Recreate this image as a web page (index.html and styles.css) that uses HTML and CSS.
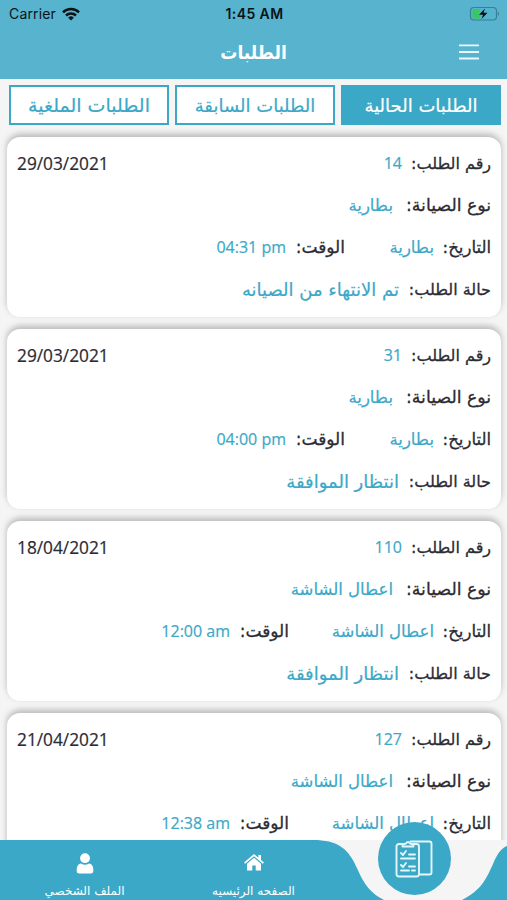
FILE: index.html
```
<!DOCTYPE html>
<html lang="ar" dir="rtl">
<head>
    <meta charset="UTF-8">
    <meta name="viewport" content="width=device-width, initial-scale=1">
    <title>الطلبات</title>
    <link rel="stylesheet" href="styles.css">
</head>
<body>

<div class="app">
    <header class="header">
        <div class="statusBar" dir="ltr">
            <div class="carrier">
                <span>Carrier</span>
                <svg width="18" height="14" viewBox="0 0 18 14" fill="none" stroke="#0b1316" stroke-width="2.5">
                    <path d="M1 5.3a11.5 11.5 0 0 1 16 0"/>
                    <path d="M4 8.5a7.2 7.2 0 0 1 10 0"/>
                    <path d="M6.2 10.7a4 4 0 0 1 5.6 0L9 13.6z" fill="#0b1316" stroke="none"/>
                </svg>
            </div>
            <div class="clock">1:45 AM</div>
            <svg class="battery" width="31" height="16" viewBox="0 0 31 16">
                <rect x="1.500" y="1.500" width="26" height="12.500" rx="3.500" fill="none" stroke="#3b7f95" stroke-width="1.200"/>
                <path d="M5.500 3H11.500L9 8.500H12L11 12.500H5.500a2 2 0 0 1-2-2V5a2 2 0 0 1 2-2z" fill="#34cb58"/>
                <path d="M16 2.500L10 8.800h4L12.500 13 18.500 6.700h-4z" fill="#071012"/>
                <path d="M28.800 5.500q2.500 2.300 0 4.600z" fill="#3b7f95"/>
            </svg>
        </div>
        <div class="titleBar">
            <svg class="menu" width="20" height="16" viewBox="0 0 20 16" stroke="#e8f8fc" stroke-width="1.8">
                <path d="M0 1.300h20M0 8h20M0 14.500h20"/>
            </svg>
            <h1 class="title">الطلبات</h1>
        </div>
    </header>

    <div class="tabs">
        <div class="tab active"><span>الطلبات الحالية</span></div>
        <div class="tab previous"><span>الطلبات السابقة</span></div>
        <div class="tab canceled"><span>الطلبات الملغية</span></div>
    </div>

    <div class="orders">
        <div class="order">
            <div class="row">
                <span class="label number">رقم الطلب:</span><span class="value" dir="ltr">14</span>
                <span class="date" dir="ltr">29/03/2021</span>
            </div>
            <div class="row">
                <span class="label type">نوع الصيانة:</span><span class="value">بطارية</span>
            </div>
            <div class="row">
                <span class="label day">التاريخ:</span><span class="value part">بطارية</span>
                <span class="label time">الوقت:</span><span class="value" dir="ltr">04:31 pm</span>
            </div>
            <div class="row">
                <span class="label state">حالة الطلب:</span><span class="value status">تم الانتهاء من الصيانه</span>
            </div>
        </div>

        <div class="order">
            <div class="row">
                <span class="label number">رقم الطلب:</span><span class="value" dir="ltr">31</span>
                <span class="date" dir="ltr">29/03/2021</span>
            </div>
            <div class="row">
                <span class="label type">نوع الصيانة:</span><span class="value">بطارية</span>
            </div>
            <div class="row">
                <span class="label day">التاريخ:</span><span class="value part">بطارية</span>
                <span class="label time">الوقت:</span><span class="value" dir="ltr">04:00 pm</span>
            </div>
            <div class="row">
                <span class="label state">حالة الطلب:</span><span class="value status">انتظار الموافقة</span>
            </div>
        </div>

        <div class="order">
            <div class="row">
                <span class="label number">رقم الطلب:</span><span class="value" dir="ltr">110</span>
                <span class="date" dir="ltr">18/04/2021</span>
            </div>
            <div class="row">
                <span class="label type">نوع الصيانة:</span><span class="value">اعطال الشاشة</span>
            </div>
            <div class="row">
                <span class="label day">التاريخ:</span><span class="value part wide">اعطال الشاشة</span>
                <span class="label time">الوقت:</span><span class="value" dir="ltr">12:00 am</span>
            </div>
            <div class="row">
                <span class="label state">حالة الطلب:</span><span class="value status">انتظار الموافقة</span>
            </div>
        </div>

        <div class="order">
            <div class="row">
                <span class="label number">رقم الطلب:</span><span class="value" dir="ltr">127</span>
                <span class="date" dir="ltr">21/04/2021</span>
            </div>
            <div class="row">
                <span class="label type">نوع الصيانة:</span><span class="value">اعطال الشاشة</span>
            </div>
            <div class="row">
                <span class="label day">التاريخ:</span><span class="value part wide">اعطال الشاشة</span>
                <span class="label time">الوقت:</span><span class="value" dir="ltr">12:38 am</span>
            </div>
        </div>
    </div>

    <nav class="navBar">
        <svg class="wave" width="507" height="60" viewBox="0 0 507 60">
            <path d="M0 0H313C338 0 347 9 354 22C362 38 365 50 384 60H0zM462 60C482 50 487 37 493 24C498 12 502 8 507 6V60z" fill="#3ba8c8"/>
        </svg>
        <div class="ordersButton">
            <svg width="38" height="38" viewBox="0 0 38 38" fill="none" stroke="#e4f7fb" stroke-width="1.9" stroke-linejoin="round" stroke-linecap="round">
                <path d="M8 4H4a2.500 2.500 0 0 0-2.500 2.500V34A2.500 2.500 0 0 0 4 36.500H21.500A2.500 2.500 0 0 0 24 34V6.500A2.500 2.500 0 0 0 21.500 4H18"/>
                <path d="M7.500 6.500V4.500L11 3.500Q13 .5 15 3.500L18.500 4.500V6.500z"/>
                <path d="M15.500 1.500H34.500a2 2 0 0 1 2 2V32.500a2 2 0 0 1-2 2H25"/>
                <path d="M6 13l2 2 3-4M14 14.500h6M6 18.500h14M6 25l2 2 3-4M14 26.500h6M6 30.500h8M17 30.500h3"/>
            </svg>
        </div>
        <div class="navItem home">
            <svg width="20" height="17" viewBox="0 0 20 17" fill="#fff">
                <path d="M10 0L0 8.500l1.200 1.300L10 2.300l8.800 7.500L20 8.500l-3-2.600V1h-2.600v2.700z"/>
                <path d="M10 3.800L3 9.800V16.500H8.300V11.500h3.400v5H17V9.800z"/>
            </svg>
            <span>الصفحه الرئيسيه</span>
        </div>
        <div class="navItem profile">
            <svg width="18" height="21" viewBox="0 0 18 21" fill="#fff">
                <circle cx="9" cy="5.200" r="4.900"/>
                <path d="M5 10.500Q9 13 13 10.500Q17.300 11 17.300 17V18Q17.300 20.500 14.500 20.500H3.500Q.7 20.500 .7 18V17Q.7 11 5 10.500z"/>
            </svg>
            <span>الملف الشخصي</span>
        </div>
    </nav>
</div>

</body>
</html>
```
FILE: styles.css
```
* {
    box-sizing: border-box;
}

body {
    margin: 0;
    font-family: "DejaVu Sans", sans-serif;
}

.app {
    display: flex;
    flex-direction: column;
    width: 507px;
    height: 900px;
    overflow: hidden;
    background: #f5f5f5;
}

.header {
    height: 79px;
    flex: none;
    background: #57b3ce;
}

.statusBar {
    display: flex;
    justify-content: space-between;
    align-items: center;
    height: 27px;
    padding: 0 7px 0 9px;
    font-family: Inter, sans-serif;
    font-size: 14px;
    color: #0b1316;
}

.carrier {
    display: flex;
    align-items: center;
    gap: 6px;
    width: 100px;
    letter-spacing: 0.150px;
}

.clock {
    font-weight: 600;
    letter-spacing: 0.400px;
}

.battery {
    margin-left: 69px;
}

.titleBar {
    display: flex;
    align-items: center;
    height: 50px;
    padding: 0 28px;
}

.title {
    flex: 1;
    margin: 0 0 0 20px;
    text-align: center;
    font-family: "DejaVu Sans Condensed", "DejaVu Sans", sans-serif;
    font-size: 19px;
    color: #fff;
}

.tabs {
    display: flex;
    flex: none;
    gap: 6px;
    padding: 6px 6px 0 9px;
}

.tab {
    display: flex;
    justify-content: center;
    align-items: center;
    width: 160px;
    height: 40px;
    border: 2px solid #3ba8c8;
    background: #fff;
    color: #3ba8c8;
    font-size: 18px;
    white-space: nowrap;
    -webkit-text-stroke: 0.2px;
}

.tab.active {
    background: #3ba8c8;
    color: #fff;
}

.tab.canceled {
    font-size: 19px;
}

.orders {
    display: flex;
    flex-direction: column;
    flex: 1;
    gap: 12px;
    min-height: 0;
    padding: 11.500px 6px 0 7px;
    overflow: hidden;
}

.order {
    flex: none;
    height: 180px;
    padding: 5.500px 10px;
    border-radius: 13px;
    background: #fff;
    box-shadow: 0 -3px 6px rgba(0, 0, 0, 0.25);
}

.row {
    display: flex;
    align-items: center;
    height: 42px;
    font-size: 16.500px;
    white-space: nowrap;
}

.label {
    flex: none;
    color: #2b2b33;
    -webkit-text-stroke: 0.3px;
}

.number {
    width: 89px;
    font-size: 16px;
}

.type {
    width: 98px;
    font-size: 17.300px;
}

.day {
    width: 57px;
}

.time {
    width: 59px;
    font-size: 17px;
}

.state {
    width: 92px;
    font-size: 16px;
}

.value {
    color: #3ba8c8;
    -webkit-text-stroke: 0.2px;
}

.value.status {
    font-size: 18px;
}

.part {
    width: 89px;
}

.part.wide {
    width: 145px;
}

.value[dir="ltr"],
.date {
    font-family: "Open Sans", sans-serif;
    font-size: 16px;
}

.date {
    margin-right: auto;
    font-size: 17.300px;
    color: #2b2b33;
    -webkit-text-stroke: 0.2px;
}

.navBar {
    position: relative;
    display: flex;
    flex: none;
    height: 60px;
    padding-right: 169px;
}

.wave {
    position: absolute;
    left: 0;
    top: 0;
}

.ordersButton {
    position: absolute;
    left: 378px;
    top: -18px;
    display: flex;
    justify-content: center;
    align-items: center;
    width: 73px;
    height: 73px;
    padding-left: 2px;
    padding-right: 3px;
    border-radius: 50%;
    background: #3ba8c8;
}

.navItem {
    position: relative;
    display: flex;
    flex-direction: column;
    align-items: center;
    justify-content: space-between;
    width: 169px;
    padding: 13px 0 2px;
    color: #fff;
    font-size: 12px;
    white-space: nowrap;
}

.home {
    padding-top: 14px;
}
```
